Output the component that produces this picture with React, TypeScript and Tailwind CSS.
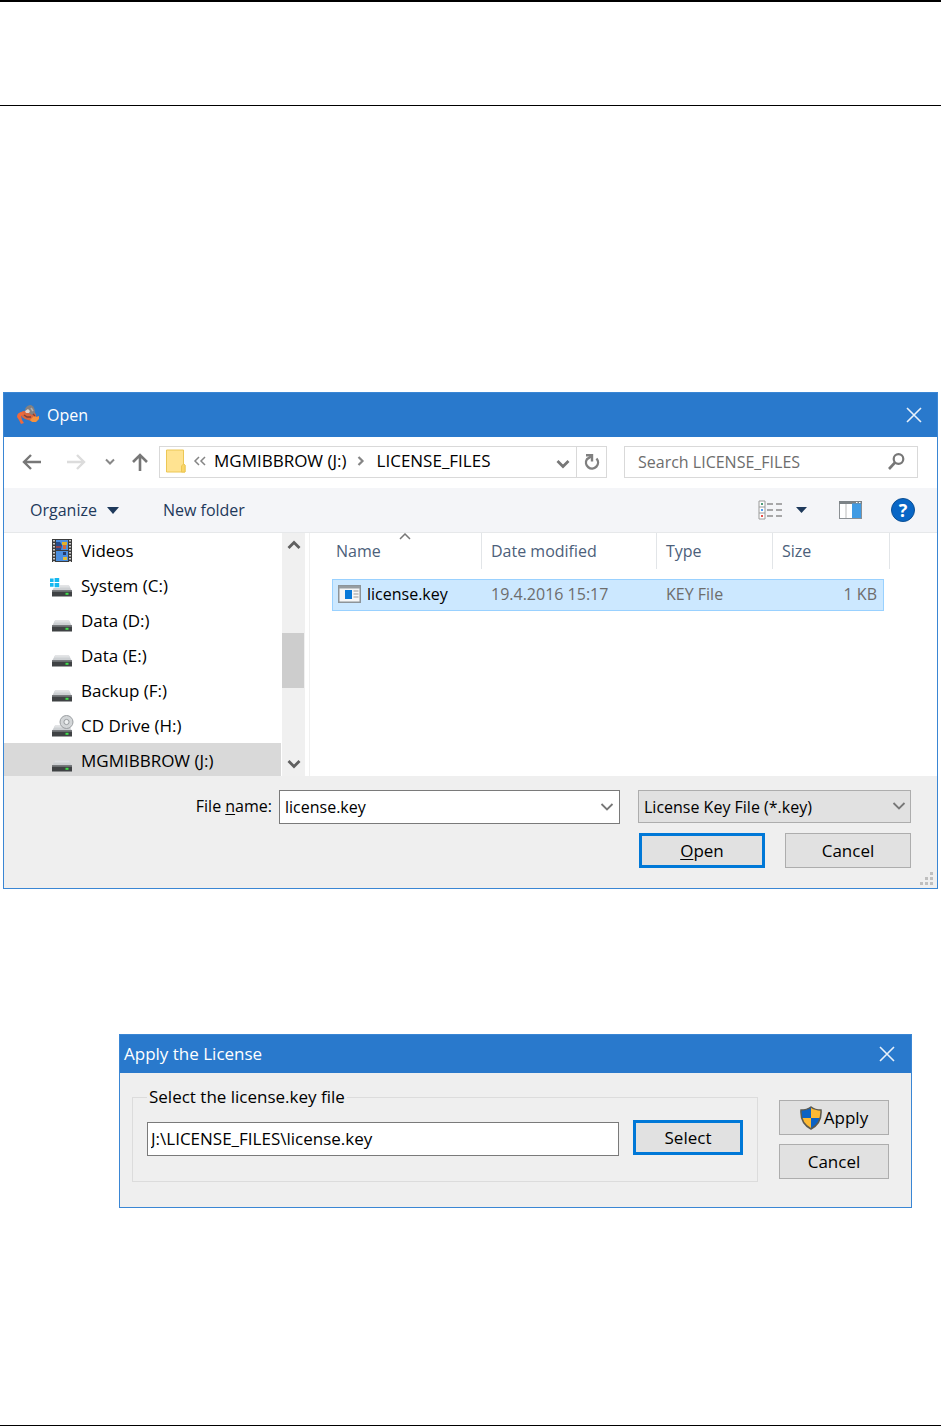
import React from "react";

function CloseIcon() {
  return (
    <svg width="16" height="16" viewBox="0 0 16 16" fill="none" stroke="#e8f1fa" strokeWidth="1.6">
      <path d="M1 1 L15 15 M15 1 L1 15" />
    </svg>
  );
}

function Chevron({ color = "#777", width = 2 }: { color?: string; width?: number }) {
  return (
    <svg width="14" height="10" viewBox="0 0 14 10" fill="none" stroke={color} strokeWidth={width}>
      <path d="M1.5 2 L7 7.5 L12.5 2" />
    </svg>
  );
}

function CrabIcon() {
  return (
    <svg width="24" height="22" viewBox="0 0 24 22">
      <path d="M4 9 Q7 6 11 7 L18 8 Q21 10 20 15 L15 17 L9 15 L6 13 Z" fill="#d9673f" />
      <path d="M7 8 Q1 8 1 13 L3 16 L5 20 L8 19 L6 16 L5 12 L8 10Z" fill="#ee6a3c" />
      <path d="M18 12 L20 13 L23 12 L23 15 L20 18 L16 18 L14 16Z" fill="#f5923e" />
      <path d="M9 5 Q11 1 15 1 Q19 3 19 9 L16 11 L11 8Z" fill="#85807f" />
      <path d="M9 7 L12 5 L14 7 L13 9 L10 9Z" fill="#ddd5d0" />
      <path d="M15 4 L17 7" stroke="#b5afac" strokeWidth="1.5" fill="none" />
      <path d="M8 11 L11 13 L15 13 M17 10 L19 12" stroke="#7d4238" strokeWidth="1.4" fill="none" />
    </svg>
  );
}

function VideoIcon() {
  return (
    <svg width="20" height="23" viewBox="0 0 20 23">
      <rect width="20" height="23" fill="#3c3c3c" />
      <rect x="4" y="1" width="12" height="10" fill="#4b8fe0" />
      <rect x="4" y="12" width="12" height="10" fill="#4b8fe0" />
      <path d="M4 3h4l2 3-1 5H4z" fill="#264c8c" />
      <path d="M10 3h5v3h-5z" fill="#e0b22c" />
      <path d="M11 6h3v4h-3z" fill="#d46a3a" />
      <path d="M4 7h5v2H4z" fill="#8d4352" />
      <path d="M11 13h3v3h-3z" fill="#263c6c" />
      <path d="M11 18h4v3h-4z" fill="#e2bd38" />
      <path d="M2 1v22 M18 1v22" stroke="#f2f2f2" strokeWidth="1.6" strokeDasharray="1.6 1.4" />
    </svg>
  );
}

function DriveIcon({ kind }: { kind?: "system" | "cd" }) {
  return (
    <svg width="24" height="24" viewBox="0 0 24 24">
      <path d="M5 11.5h14l3 5.500H2z" fill="#cdd0d3" />
      <path d="M5 11.5h14l1 2H4z" fill="#dfe1e3" />
      {kind === "system" && (
        <g>
          <path d="M-1 3h10.500v11H-1z" fill="#fff" />
          <path d="M0 4.500h3.600v3.600H0z M4.600 4h4.600v4.100H4.600z M0 9.100h3.600v3.600H0z M4.600 9.100h4.600v4.100H4.600z" fill="#15b8f0" />
        </g>
      )}
      {kind === "cd" && (
        <g>
          <circle cx="16.500" cy="8" r="6.500" fill="#d3d6d8" stroke="#9b9fa2" />
          <circle cx="16.500" cy="8" r="2.600" fill="#eef0f1" stroke="#999da0" />
        </g>
      )}
      <rect x="2" y="16.500" width="20" height="6" fill="#3f4244" />
      <rect x="2" y="16.500" width="20" height="1.500" fill="#6a6d70" />
      <rect x="15.500" y="18.800" width="3" height="2" fill="#3fe04a" />
    </svg>
  );
}

function ShieldIcon() {
  return (
    <svg width="22" height="24" viewBox="0 0 22 24">
      <defs>
        <clipPath id="shield">
          <path d="M11 1 Q15 4 21 4 Q22 17 11 23 Q0 17 1 4 Q7 4 11 1Z" />
        </clipPath>
      </defs>
      <g clipPath="url(#shield)">
        <path d="M0 0h11v12H0z M11 12h11v12H11z" fill="#0b62c4" />
        <path d="M11 0h11v12H11z M0 12h11v12H0z" fill="#fdb933" />
      </g>
      <path d="M11 1 Q15 4 21 4 Q22 17 11 23 Q0 17 1 4 Q7 4 11 1Z" fill="none" stroke="#5c5a50" strokeWidth="1.500" />
    </svg>
  );
}

const places: { label: string; icon: React.ReactNode; selected?: boolean }[] = [
  { label: "Videos", icon: <VideoIcon /> },
  { label: "System (C:)", icon: <DriveIcon kind="system" /> },
  { label: "Data (D:)", icon: <DriveIcon /> },
  { label: "Data (E:)", icon: <DriveIcon /> },
  { label: "Backup (F:)", icon: <DriveIcon /> },
  { label: "CD Drive (H:)", icon: <DriveIcon kind="cd" /> },
  { label: "MGMIBBROW (J:)", icon: <DriveIcon />, selected: true },
];

function AddressRow() {
  return (
    <div className="flex h-[51px] items-center bg-white pr-[19px] pb-0.5 pl-[18px]">
      <div className="flex w-[137px] items-center justify-between pr-2.5">
        <button aria-label="Back">
          <svg width="20" height="18" viewBox="0 0 20 18" fill="none" stroke="#777" strokeWidth="2.400">
            <path d="M19 9H2 M9 2L2 9L9 16" />
          </svg>
        </button>
        <button aria-label="Forward" className="pl-4">
          <svg width="20" height="18" viewBox="0 0 20 18" fill="none" stroke="#dcdcdc" strokeWidth="2.400">
            <path d="M1 9H18 M11 2L18 9L11 16" />
          </svg>
        </button>
        <button aria-label="Recent locations" className="pl-3">
          <svg width="10" height="8" viewBox="0 0 10 8" fill="none" stroke="#888" strokeWidth="2">
            <path d="M1 1.500L5 5.500L9 1.500" />
          </svg>
        </button>
        <button aria-label="Up" className="pl-2">
          <svg width="18" height="18" viewBox="0 0 18 18" fill="none" stroke="#777" strokeWidth="2.600">
            <path d="M9 18V2 M2 9L9 2L16 9" />
          </svg>
        </button>
      </div>
      <div className="flex h-8 min-w-0 flex-1 border border-[#d9d9d9]">
        <nav aria-label="Path" className="flex flex-1 items-center pb-0.5 pl-1.5">
          <svg width="20" height="24" viewBox="0 0 20 24">
            <path d="M.5 1h17v14l1.500 1v7H.5z" fill="#ffe391" stroke="#ecc755" />
            <path d="M15.500 23v-6l2-2 1.500 1.500V23z" fill="#fbd667" stroke="#ecc755" />
          </svg>
          <svg className="mr-2 ml-[7px]" width="13" height="10" viewBox="0 0 13 10" fill="none" stroke="#858585" strokeWidth="1.500">
            <path d="M6 1L2 5L6 9 M12 1L8 5L12 9" />
          </svg>
          <button className="whitespace-nowrap">MGMIBBROW (J:)</button>
          <svg className="mr-3 ml-2.5" width="8" height="10" viewBox="0 0 8 10" fill="none" stroke="#858585" strokeWidth="2.200">
            <path d="M1.500 1L5.500 5L1.500 9" />
          </svg>
          <button className="whitespace-nowrap">LICENSE_FILES</button>
        </nav>
        <button aria-label="Previous locations" className="px-1.5 pt-1">
          <Chevron width={2.8} />
        </button>
        <button aria-label="Refresh" className="flex w-[30px] items-center justify-center border-l border-[#d9d9d9]">
          <svg width="16" height="18" viewBox="0 0 16 18" fill="none" stroke="#808080" strokeWidth="2.400">
            <path d="M12.500 5.500A6 6 0 1 1 3 6.200L7 3.500" />
            <path d="M2 2.200H8V8.500" />
          </svg>
        </button>
      </div>
      <label className="ml-[17px] flex h-8 w-[294px] items-center border border-[#d9d9d9] pr-3 pl-[13px]">
        <input aria-label="Search" placeholder="Search LICENSE_FILES" className="min-w-0 flex-1 text-base outline-none placeholder:text-[#6d6d6d]" />
        <svg width="17" height="17" viewBox="0 0 17 17" fill="none" stroke="#777" strokeWidth="2.200">
          <circle cx="10.500" cy="6" r="4.800" />
          <path d="M7 9.500L1 16" strokeWidth="2.600" />
        </svg>
      </label>
    </div>
  );
}

function Toolbar() {
  return (
    <div className="flex h-[45px] items-center border-b border-[#e6e8ea] bg-[#f4f5f8] pr-[22px] pl-[26px] text-base text-[#1e395b]">
      <button className="flex items-center gap-2.5">
        Organize
        <svg width="12" height="7" viewBox="0 0 12 7">
          <path d="M0 0H12L6 7Z" fill="#1e395b" />
        </svg>
      </button>
      <button className="ml-11 flex-1 text-left">New folder</button>
      <button aria-label="Change view" className="flex items-center gap-[13px]">
        <svg width="25" height="20" viewBox="0 0 25 20" fill="none">
          <path d="M1 1h6v18H1z M1 7h6 M1 13h6" stroke="#9a9a9a" fill="#fff" />
          <path d="M9 4h6 M18 4h6 M9 10h6 M18 10h6 M9 16h6 M18 16h6" stroke="#8d8d8d" strokeWidth="1.500" />
          <path d="M3 4h2" stroke="#4d9b78" strokeWidth="2" />
          <path d="M3 10h2" stroke="#4f9df5" strokeWidth="2" />
          <path d="M3 16h2" stroke="#e5504b" strokeWidth="2" />
        </svg>
        <svg width="11" height="6" viewBox="0 0 11 6">
          <path d="M0 0H11L5.500 6Z" fill="#1e395b" />
        </svg>
      </button>
      <button aria-label="Preview pane" className="ml-8">
        <svg width="23" height="18" viewBox="0 0 23 18">
          <rect x=".5" y=".5" width="22" height="17" fill="#fff" stroke="#8b9094" />
          <rect width="23" height="3" fill="#7c8286" />
          <path d="M7 3v14" stroke="#bbb" />
          <rect x="13" y="2.500" width="9" height="14.500" fill="#419be3" />
          <path d="M17 1.500h1.500 M20 1.500h1.500" stroke="#fff" />
        </svg>
      </button>
      <button aria-label="Help" className="ml-[29px] flex h-6 w-6 items-center justify-center rounded-full border border-[#0b4f94] bg-[#0866c6] text-lg font-bold text-white">
        ?
      </button>
    </div>
  );
}

function FileTable() {
  const head = "h-9 border-r border-[#e2e5e8] pl-[9px] text-left font-normal text-[#4c607a]";
  const cell = "h-8 border-y border-[#99d1ff] bg-[#cce8ff] pb-0.5 pl-[9px] text-[#6d6d6d]";
  return (
    <table className="table-fixed border-separate border-spacing-0 text-base">
      <colgroup>
        <col className="w-[150px]" />
        <col className="w-[175px]" />
        <col className="w-[116px]" />
        <col className="w-[111px]" />
        <col className="w-[6px]" />
      </colgroup>
      <thead>
        <tr>
          <th className="relative h-9 border-r border-[#e2e5e8] pl-1 text-left font-normal text-[#4c607a]">
            Name
            <svg className="absolute top-0 left-1/2 -ml-2" width="12" height="7" viewBox="0 0 12 7" fill="none" stroke="#777" strokeWidth="1.500">
              <path d="M1 6L6 1L11 6" />
            </svg>
          </th>
          <th className={head}>Date modified</th>
          <th className={head}>Type</th>
          <th className="h-9 pl-[9px] text-left font-normal text-[#4c607a]">Size</th>
          <td className="border-r border-[#e2e5e8]" />
        </tr>
      </thead>
      <tbody>
        <tr>
          <td colSpan={5} className="h-2.5" />
        </tr>
        <tr>
          <td className="h-8 border-y border-l border-[#99d1ff] bg-[#cce8ff] pb-0.5 pl-[5px] text-black">
            <span className="flex items-center gap-1.5">
              <svg width="23" height="18" viewBox="0 0 23 18">
                <rect x=".75" y=".75" width="21.500" height="16.500" fill="#f6f6f6" stroke="#8d9499" strokeWidth="1.500" />
                <rect x="1" y="1" width="21" height="2.500" fill="#979da1" />
                <rect x="7" y="5" width="7" height="9" fill="#0878d8" />
                <path d="M15.500 6h5 M15.500 9h5 M15.500 12h5" stroke="#989898" />
              </svg>
              license.key
            </span>
          </td>
          <td className={cell}>19.4.2016 15:17</td>
          <td className={cell}>KEY File</td>
          <td className="h-8 border-y border-r border-[#99d1ff] bg-[#cce8ff] pr-1.5 pb-0.5 text-right text-[#6d6d6d]">1 KB</td>
          <td />
        </tr>
      </tbody>
    </table>
  );
}

function OpenDialog() {
  return (
    <section aria-label="Open" className="mr-[3px] ml-[3px] border border-[#3a86d4] bg-[#efefef]">
      <header className="flex h-11 items-center bg-[#2979cc] pr-[15px] pl-3 text-base text-white">
        <CrabIcon />
        <h2 className="ml-[7px] flex-1">Open</h2>
        <button aria-label="Close"><CloseIcon /></button>
      </header>
      <AddressRow />
      <Toolbar />
      <div className="flex h-[243px] bg-white">
        <ul className="w-[277px] overflow-hidden">
          {places.map((p) => (
            <li key={p.label} className={p.selected ? "bg-[#d9d9d9]" : ""}>
              <button className="flex h-[35px] w-full items-center pl-[46px] text-left">
                <span className="flex w-6 justify-center">{p.icon}</span>
                <span className="ml-[7px]">{p.label}</span>
              </button>
            </li>
          ))}
        </ul>
        <div className="ml-px flex w-[23px] flex-col items-center bg-[#f0f0f0] py-[7px]">
          <button aria-label="Scroll up" className="rotate-180"><Chevron color="#606060" width={2.8} /></button>
          <div className="mt-auto mb-[71px] h-[55px] w-[22px] self-start bg-[#cdcdcd]" />
          <button aria-label="Scroll down"><Chevron color="#606060" width={2.8} /></button>
        </div>
        <div className="ml-1 min-w-0 flex-1 border-l border-[#f0f0f0] pl-[22px]">
          <FileTable />
        </div>
      </div>
      <form className="relative h-28 pt-3.5 pr-[26px] text-base" onSubmit={(e) => e.preventDefault()}>
        <div className="flex items-start">
          <label htmlFor="file-name" className="w-[275px] pt-1 pr-[7px] text-right">
            File <u className="underline-offset-2">n</u>ame:
          </label>
          <div className="flex h-[34px] min-w-0 flex-1 items-center border border-[#7a7a7a] bg-white pr-[5px]">
            <input id="file-name" defaultValue="license.key" className="min-w-0 flex-1 pl-[5px] outline-none" />
            <button type="button" aria-label="Recent file names"><Chevron width={1.8} /></button>
          </div>
          <div className="relative ml-[18px] w-[273px]">
            <select aria-label="File type" className="h-[33px] w-full appearance-none border border-[#adadad] bg-[#e1e1e1] pl-[5px]">
              <option>License Key File (*.key)</option>
            </select>
            <span className="pointer-events-none absolute top-[11px] right-[5px] flex"><Chevron width={1.8} /></span>
          </div>
        </div>
        <div className="mt-[9px] flex justify-end gap-5 text-[17px]">
          <button className="h-[35px] w-[126px] border-[3px] border-[#0078d7] bg-[#e1e1e1]">
            <u className="underline-offset-2">O</u>pen
          </button>
          <button type="button" className="h-[35px] w-[126px] border border-[#adadad] bg-[#e1e1e1]">Cancel</button>
        </div>
        <svg className="absolute right-1 bottom-[3px]" width="13" height="13" viewBox="0 0 13 13" fill="#bfbfbf">
          <path d="M10 0h3v3h-3z M10 5h3v3h-3z M5 5h3v3H5z M10 10h3v3h-3z M5 10h3v3H5z M0 10h3v3H0z" />
        </svg>
      </form>
    </section>
  );
}

function LicenseDialog() {
  return (
    <section aria-label="Apply the License" className="mt-[145px] mr-[29px] ml-[119px] border border-[#3a86d4] bg-[#efefef]">
      <header className="flex h-[38px] items-center bg-[#2979cc] pr-4 pl-1 text-white">
        <h2 className="flex-1">Apply the License</h2>
        <button aria-label="Close"><CloseIcon /></button>
      </header>
      <form className="flex items-start pt-3 pr-[22px] pb-[25px] pl-3" onSubmit={(e) => e.preventDefault()}>
        <fieldset className="min-w-0 flex-1 border border-[#dcdcdc] px-3.5 pb-[25px]">
          <legend className="px-0.5 leading-6">Select the license.key file</legend>
          <div className="flex items-start pt-[11px]">
            <input aria-label="License file path" defaultValue="J:\LICENSE_FILES\license.key" className="mt-0.5 h-[34px] min-w-0 flex-1 border border-[#7a7a7a] bg-white px-[3px] pb-0.5 outline-none" />
            <button type="button" className="ml-3.5 h-[35px] w-[110px] border-[3px] border-[#0078d7] bg-[#e1e1e1]">Select</button>
          </div>
        </fieldset>
        <div className="mt-[15px] ml-[21px] flex w-[110px] flex-col gap-[9px]">
          <button className="flex h-[35px] items-center justify-center gap-0.5 border border-[#adadad] bg-[#e1e1e1]">
            <ShieldIcon />
            Apply
          </button>
          <button type="button" className="h-[35px] border border-[#adadad] bg-[#e1e1e1]">Cancel</button>
        </div>
      </form>
    </section>
  );
}

export default function App() {
  return (
    <main className="border-b border-black bg-white pb-[217px] font-['Open_Sans','Noto_Sans',sans-serif] text-[17px] leading-6 text-black">
      <div className="mb-[286px] h-[106px] border-t-2 border-b border-black" />
      <OpenDialog />
      <LicenseDialog />
    </main>
  );
}
